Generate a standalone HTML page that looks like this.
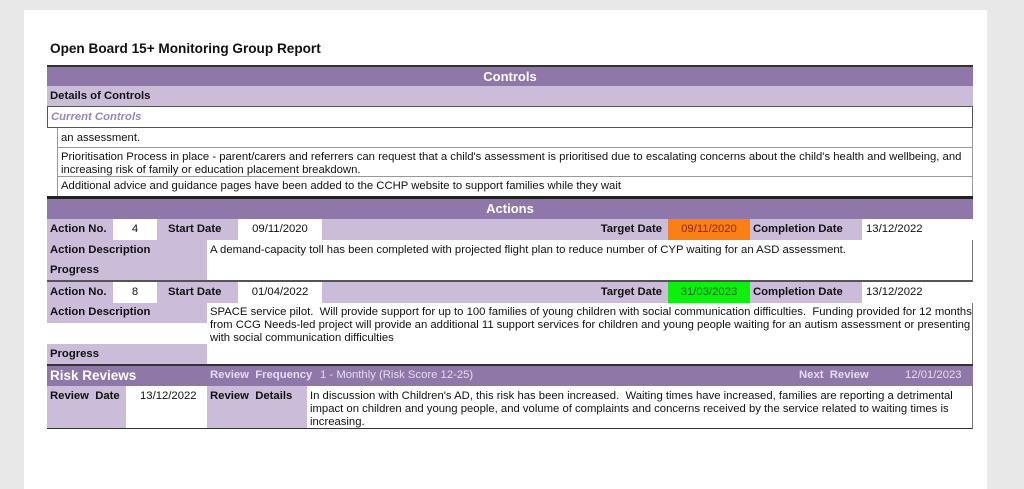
<!DOCTYPE html>
<html><head><meta charset="utf-8"><style>
*{margin:0;padding:0;box-sizing:border-box}
body{width:1024px;height:489px;background:#e8e8e8;position:relative;overflow:hidden;font-family:"Liberation Sans",Arial,sans-serif;font-size:11.3px;color:#111}
.pg{position:absolute;left:24px;top:10px;width:963px;height:479px;background:#fff}
.a{position:absolute;white-space:nowrap}
.h{background:#8f77a9;color:#fff;font-weight:bold}
.l{background:#cbbcd9}
.w{background:#fff}
.b{font-weight:bold}
.c{line-height:20px;padding-left:3px}
</style></head><body>
<div class="pg"></div>
<div class="a b" style="left:50px;top:41px;font-size:13.6px">Open Board 15+ Monitoring Group Report</div>

<div class="a h" style="left:47px;top:65px;width:926px;height:21px;border-top:2px solid #333;text-align:center;font-size:13px;line-height:19px">Controls</div>
<div class="a l b c" style="left:47px;top:86px;width:926px;height:21px;border-bottom:1px solid #555">Details of Controls</div>
<div class="a c" style="left:47px;top:107px;width:926px;height:21px;border:1px solid #555;border-top:0;color:#9a85b8;font-style:italic;font-weight:bold">Current Controls</div>
<div class="a" style="left:57px;top:128px;width:916px;height:69px;border-left:1px solid #999;border-right:1px solid #999"></div>
<div class="a c" style="left:57px;top:128px;width:916px;height:20px;border-bottom:1px solid #999;padding-left:4px">an assessment.</div>
<div class="a" style="left:57px;top:148px;width:916px;height:29px;border-bottom:1px solid #999;padding:3px 4px;line-height:13px;white-space:normal">Prioritisation Process in place - parent/carers and referrers can request that a child's assessment is prioritised due to escalating concerns about the child's health and wellbeing, and increasing risk of family or education placement breakdown.</div>
<div class="a c" style="left:57px;top:177px;width:916px;height:20px;padding-left:4px;line-height:18px">Additional advice and guidance pages have been added to the CCHP website to support families while they wait</div>

<div class="a h" style="left:47px;top:196px;width:926px;height:23px;border-top:3px solid #222;text-align:center;font-size:13px;line-height:20px">Actions</div>

<div class="a l" style="left:47px;top:219px;width:926px;height:21px"></div>
<div class="a b c" style="left:47px;top:219px">Action No.</div>
<div class="a w" style="left:113px;top:219px;width:44px;height:21px;text-align:center;line-height:20px">4</div>
<div class="a b c" style="left:165px;top:219px">Start Date</div>
<div class="a w" style="left:238px;top:219px;width:84px;height:21px;text-align:center;line-height:20px">09/11/2020</div>
<div class="a b" style="left:570px;top:219px;width:92px;text-align:right;line-height:20px">Target Date</div>
<div class="a" style="left:668px;top:219px;width:82px;height:21px;background:#fa7f14;color:#8a2a00;text-align:center;line-height:20px">09/11/2020</div>
<div class="a b c" style="left:750px;top:219px">Completion Date</div>
<div class="a w c" style="left:862px;top:219px;width:111px;height:21px;padding-left:4px">13/12/2022</div>

<div class="a l" style="left:47px;top:240px;width:160px;height:42px;border-bottom:2px solid #555"></div>
<div class="a w" style="left:207px;top:240px;width:766px;height:42px;border-right:1px solid #777;border-bottom:2px solid #555"></div>
<div class="a b c" style="left:47px;top:240px">Action Description</div>
<div class="a b c" style="left:47px;top:260px">Progress</div>
<div class="a" style="left:210px;top:240px;line-height:20px">A demand-capacity toll has been completed with projected flight plan to reduce number of CYP waiting for an ASD assessment.</div>

<div class="a l" style="left:47px;top:282px;width:926px;height:21px"></div>
<div class="a b c" style="left:47px;top:282px">Action No.</div>
<div class="a w" style="left:113px;top:282px;width:44px;height:21px;text-align:center;line-height:20px">8</div>
<div class="a b c" style="left:165px;top:282px">Start Date</div>
<div class="a w" style="left:238px;top:282px;width:84px;height:21px;text-align:center;line-height:20px">01/04/2022</div>
<div class="a b" style="left:570px;top:282px;width:92px;text-align:right;line-height:20px">Target Date</div>
<div class="a" style="left:668px;top:282px;width:82px;height:21px;background:#0df00d;color:#0a6a0a;text-align:center;line-height:20px">31/03/2023</div>
<div class="a b c" style="left:750px;top:282px">Completion Date</div>
<div class="a w c" style="left:862px;top:282px;width:111px;height:21px;padding-left:4px">13/12/2022</div>

<div class="a l" style="left:47px;top:303px;width:160px;height:20px"></div>
<div class="a w" style="left:47px;top:323px;width:160px;height:21px"></div>
<div class="a l" style="left:47px;top:344px;width:160px;height:20px"></div>
<div class="a w" style="left:207px;top:303px;width:766px;height:61px;border-right:1px solid #777"></div>
<div class="a b c" style="left:47px;top:302px">Action Description</div>
<div class="a b c" style="left:47px;top:344px">Progress</div>
<div class="a" style="left:210px;top:306px;width:762px;line-height:13px;white-space:normal">SPACE service pilot.&nbsp; Will provide support for up to 100 families of young children with social communication difficulties.&nbsp; Funding provided for 12 months from CCG Needs-led project will provide an additional 11 support services for children and young people waiting for an autism assessment or presenting with social communication difficulties</div>

<div class="a h" style="left:47px;top:364px;width:926px;height:22px;border-top:2px solid #333"></div>
<div class="a b" style="left:50px;top:366px;color:#fff;font-size:13.5px;line-height:20px">Risk Reviews</div>
<div class="a b" style="left:210px;top:366px;color:#e6dcf0;line-height:18px">Review&nbsp; Frequency</div>
<div class="a" style="left:320px;top:366px;color:#e6dcf0;line-height:18px">1 - Monthly (Risk Score 12-25)</div>
<div class="a b" style="left:799px;top:366px;color:#e6dcf0;line-height:18px">Next&nbsp; Review</div>
<div class="a" style="left:905px;top:366px;color:#e6dcf0;line-height:18px">12/01/2023</div>

<div class="a" style="left:47px;top:386px;width:926px;height:43px;border-bottom:1px solid #333;border-right:1px solid #777;background:#fff"></div>
<div class="a l" style="left:47px;top:386px;width:79px;height:42px"></div>
<div class="a l" style="left:207px;top:386px;width:100px;height:42px"></div>
<div class="a b c" style="left:47px;top:386px">Review&nbsp; Date</div>
<div class="a" style="left:140px;top:386px;line-height:20px">13/12/2022</div>
<div class="a b c" style="left:207px;top:386px">Review&nbsp; Details</div>
<div class="a" style="left:310px;top:390px;width:660px;line-height:13px;white-space:normal">In discussion with Children's AD, this risk has been increased.&nbsp; Waiting times have increased, families are reporting a detrimental impact on children and young people, and volume of complaints and concerns received by the service related to waiting times is increasing.</div>
</body></html>
